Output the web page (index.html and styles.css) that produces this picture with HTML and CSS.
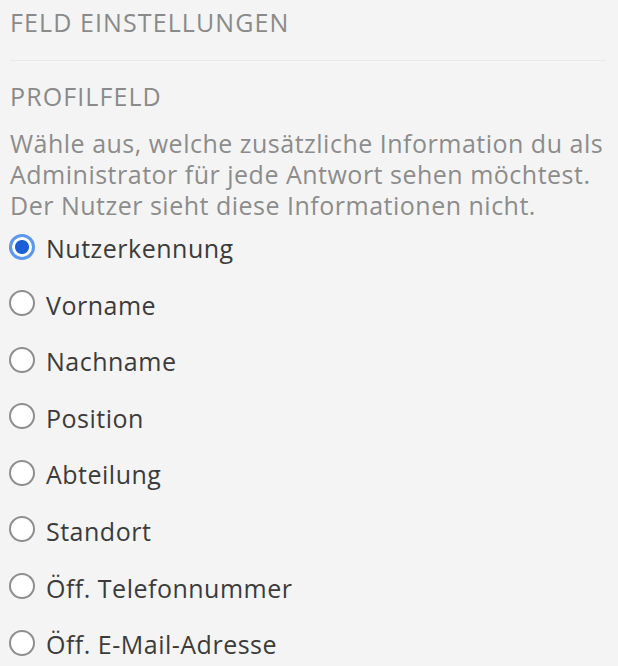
FILE: index.html
```html
<!DOCTYPE html>
<html lang="de">
<head>
    <meta charset="UTF-8">
    <meta name="viewport" content="width=device-width, initial-scale=1.0">
    <title>Feld Einstellungen</title>
    <link rel="stylesheet" href="styles.css">
</head>
<body>
    <div class="settings-panel">
        <h3 class="panel-title">Feld Einstellungen</h3>
        <div class="field-group">
            <h4 class="group-title">Profilfeld</h4>
            <p class="group-hint">Wähle aus, welche zusätzliche Information du als Administrator für jede Antwort sehen möchtest. Der Nutzer sieht diese Informationen nicht.</p>
            <div class="option-list">
                <label class="option"><input type="radio" name="profile" checked> Nutzerkennung</label>
                <label class="option"><input type="radio" name="profile"> Vorname</label>
                <label class="option"><input type="radio" name="profile"> Nachname</label>
                <label class="option"><input type="radio" name="profile"> Position</label>
                <label class="option"><input type="radio" name="profile"> Abteilung</label>
                <label class="option"><input type="radio" name="profile"> Standort</label>
                <label class="option"><input type="radio" name="profile"> Öff. Telefonnummer</label>
                <label class="option"><input type="radio" name="profile"> Öff. E-Mail-Adresse</label>
            </div>
        </div>
    </div>
</body>
</html>
```

FILE: styles.css
```css
* {
    margin: 0;
    padding: 0;
    box-sizing: border-box;
    font-family: 'Open Sans', sans-serif;
}

body {
    background: #f4f4f4;
    color: #3b3b3b;
}

.settings-panel {
    padding: 7px 12px 0 10px;
}

.panel-title,
.group-title {
    font-size: 25px;
    font-weight: 400;
    letter-spacing: 1.1px;
    text-transform: uppercase;
    color: #8a8a8a;
    line-height: 30px;
}

.panel-title {
    padding-bottom: 23px;
    border-bottom: 1px solid #e8e8e8;
}

.field-group {
    padding-top: 20px;
}

.group-title {
    margin-bottom: 17px;
}

.group-hint {
    font-size: 25px;
    letter-spacing: 0.5px;
    line-height: 31px;
    color: #8c8c8c;
}

.option-list {
    display: flex;
    flex-direction: column;
    gap: 24.6px;
    padding-top: 11px;
}

.option {
    display: flex;
    align-items: center;
    gap: 11px;
    font-size: 25px;
    letter-spacing: 0.5px;
    line-height: 32px;
    color: #3b3b3b;
}

.option input {
    appearance: none;
    width: 26px;
    height: 26px;
    margin: -3px 0 0 -1px;
    border: 2px solid #8e8e8e;
    border-radius: 50%;
    background: #fff;
    flex-shrink: 0;
}

.option input:checked {
    border: 3px solid #5b97ef;
    background: radial-gradient(circle, #1c5ed6 0 6.5px, #fff 7.5px);
}
```
